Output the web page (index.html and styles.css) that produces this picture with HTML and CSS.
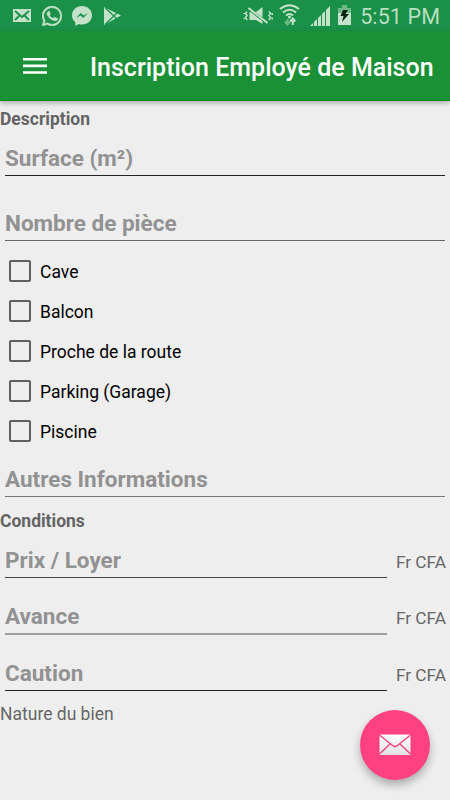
FILE: index.html
```html
<!DOCTYPE html>
<html lang="fr">
<head>
<meta charset="utf-8">
<title>Inscription Employé de Maison</title>
<link rel="stylesheet" href="styles.css">
</head>
<body>
<header class="status">
  <div class="notifications">
    <svg width="18" height="13" viewBox="0 0 18 13"><path class="tint" d="M0 0h18v13H0z"/><path class="cut" d="M2 2l7 6 7-6M2 11l4.500-4.500M16 11l-4.500-4.500"/></svg>
    <svg class="whatsapp" width="20" height="20" viewBox="0 0 24 24"><path class="tint ring" d="M17.472 14.382c-.297-.149-1.758-.867-2.030-.967-.273-.099-.471-.148-.670.150-.197.297-.767.966-.940 1.164-.173.199-.347.223-.644.075-.297-.150-1.255-.463-2.390-1.475-.883-.788-1.480-1.761-1.653-2.059-.173-.297-.018-.458.130-.606.134-.133.298-.347.446-.520.149-.174.198-.298.298-.497.099-.198.050-.371-.025-.520-.075-.149-.669-1.612-.916-2.207-.242-.579-.487-.500-.669-.510-.173-.008-.371-.010-.570-.010-.198 0-.520.074-.792.372-.272.297-1.040 1.016-1.040 2.479 0 1.462 1.065 2.875 1.213 3.074.149.198 2.096 3.200 5.077 4.487 2.500 1 3.500.900 4.200.800 1-.150 1.758-.719 2.006-1.413.248-.694.248-1.289.173-1.413-.074-.124-.272-.198-.570-.347zM12.050 0C5.500 0 .160 5.335.157 11.892c0 2.096.547 4.142 1.588 5.945L.057 24l6.305-1.654a11.900 11.900 0 0 0 5.683 1.448c6.554 0 11.890-5.335 11.893-11.893A11.820 11.820 0 0 0 12.050 0zm0 21.785a9.870 9.870 0 0 1-5.031-1.378l-.361-.214-3.741.982.998-3.648-.235-.374a9.860 9.860 0 0 1-1.510-5.260c.001-5.450 4.436-9.884 9.888-9.884a9.880 9.880 0 0 1 9.884 9.892c-.003 5.450-4.437 9.884-9.892 9.884z"/></svg>
    <svg class="messenger" width="20" height="20" viewBox="0 0 20 20"><path class="tint" d="M10 0C4.400 0 0 4 0 9.300c0 2.900 1.200 5.300 3.300 6.900V20l3.200-1.900c1.100.4 2.200.5 3.500.5 5.600 0 10-4 10-9.300S15.600 0 10 0z"/><path class="bolt" d="M4 12l4.800-5 2.700 2.500L16 7l-4.800 5-2.700-2.500z"/></svg>
    <svg class="play" width="18" height="18" viewBox="0 0 18 18"><path class="tint" d="M0 0l17 8.500L0 18z"/><path class="cut thin" d="M1 .5l12.500 12M1 17.500l12.500-12"/></svg>
  </div>
  <div class="system">
    <svg class="mute" width="29" height="18" viewBox="0 0 29 18"><path class="tint" d="M5.500 4H12l6.500-5v17L12 12H5.500z"/><path class="cut" d="M5 1l20 15"/><path class="wave strong" d="M4.500 0l19 15"/><path class="wave" d="M3 3.500L1.500 5.500 3 7.500l-1.500 2L3 12M0 5v1M0 10v1M25 3.500l1.500 2-1.500 2 1.500 2-1.500 2.500M28.200 5v2M28.200 9.500v2"/></svg>
    <svg class="wifi" width="21" height="22" viewBox="0 0 21 22"><path class="arc" d="M1 5Q10.500-2.500 20 5M4 8.500Q10.500 3 17 8.500M7 11.500q3.500-3 7 0"/><circle class="tint" cx="10.500" cy="13" r="1.500"/><path class="arrow dim" d="M8.500 15v5M6 17.500l2.500 3 2.500-3"/><path class="arrow" d="M13.800 21v-6M11.300 17.500l2.500-3 2.500 3"/></svg>
    <svg class="signal" width="20" height="20" viewBox="0 0 20 20"><path class="tint" d="M0 20l3-3v3H0zM4 16l3-3v7H4zM8 12l3-3v11H8zM12 8l3-3v15h-3zM16 4l4-4v20h-4z"/></svg>
    <svg class="battery" width="13" height="20" viewBox="0 0 13 20"><path class="tint dim" d="M4 0h5v3h4v5H0V3h4z"/><path class="tint" d="M0 8h13v12H0z"/><path class="charge" d="M5 5h5L7.500 9H11l-7 8 1.500-6H2.500z"/></svg>
    <span class="clock">5:51 PM</span>
  </div>
</header>
<nav class="appbar">
  <svg class="menu" width="24" height="16" viewBox="0 0 24 16"><path d="M0 0h24v2.600H0zM0 6.600h24v2.600H0zM0 13.200h24v2.600H0z"/></svg>
  <h1>Inscription Employé de Maison</h1>
</nav>
<main>
  <h2>Description</h2>
  <div class="field surface">Surface (m²)</div>
  <div class="field rooms">Nombre de pièce</div>
  <div class="options">
    <div class="option"><i class="box"></i><span>Cave</span></div>
    <div class="option"><i class="box"></i><span>Balcon</span></div>
    <div class="option"><i class="box"></i><span>Proche de la route</span></div>
    <div class="option"><i class="box"></i><span>Parking (Garage)</span></div>
    <div class="option"><i class="box"></i><span>Piscine</span></div>
  </div>
  <div class="field other">Autres Informations</div>
  <h2 class="conditions">Conditions</h2>
  <div class="price first"><div class="field">Prix / Loyer</div><span>Fr CFA</span></div>
  <div class="price middle"><div class="field">Avance</div><span>Fr CFA</span></div>
  <div class="price last"><div class="field">Caution</div><span>Fr CFA</span></div>
  <p>Nature du bien</p>
</main>
<div class="fab">
  <svg width="32" height="22" viewBox="0 0 32 22"><defs><linearGradient id="paper" x2="0" y2="1"><stop stop-color="#fff"/><stop offset="1" stop-color="#e2e2e2"/></linearGradient></defs><rect x=".5" y=".5" width="31" height="20.500" rx="1" fill="url(#paper)"/><path class="fold" d="M.5 1l13 10.500q2.500 2 5 0L31.500 1M.5 20L11 10M31.500 20L21 10"/></svg>
</div>
</body>
</html>
```

FILE: styles.css
```css
* { box-sizing: border-box; }
body {
  margin: 0;
  height: 800px;
  overflow: hidden;
  background: #eee;
  font-family: Roboto, sans-serif;
}
svg { display: block; flex: none; }
.status {
  display: flex;
  justify-content: space-between;
  height: 31px;
  padding: 0 10px 0 13px;
  background: #1a9048;
}
.notifications, .system { display: flex; align-items: flex-start; }
.notifications { padding-top: 9px; }
.whatsapp { margin: -3px 0 0 11px; }
.messenger { margin: -3px 0 0 10px; }
.play { margin: -2px 0 0 12px; }
.tint { fill: #c3e2c9; }
.ring { stroke: #c3e2c9; stroke-width: .5; }
.dim { opacity: .5; }
.cut { fill: none; stroke: #1a9048; stroke-width: 1.800; }
.mute .cut { stroke-width: 3; }
.thin { stroke-width: 1.300; }
.bolt { fill: #1a9048; }
.wave, .arc, .arrow { fill: none; stroke: #c3e2c9; stroke-width: 1.500; }
.strong { stroke-width: 2; }
.arc, .arrow { stroke-width: 2; }
.charge { fill: #062510; }
.mute { margin-top: 8px; overflow: visible; }
.wifi { margin: 4px 0 0 6px; }
.signal { margin: 6px 0 0 10px; }
.battery { margin: 5px 0 0 8px; }
.clock {
  margin-left: 9px;
  color: #b9dec0;
  font-size: 21.5px;
  line-height: 34px;
  letter-spacing: .1px;
  white-space: nowrap;
}
.appbar {
  display: flex;
  align-items: center;
  height: 70px;
  padding: 0 0 3px 23px;
  background: #1a9137;
  border-bottom: 1px solid #008a0a;
  box-shadow: 0 2px 5px rgba(0, 0, 0, .28);
}
.menu { fill: #fff; margin-top: 3px; }
h1 {
  margin: 7px 0 0 43px;
  color: #fff;
  font-size: 25px;
  font-weight: 500;
  line-height: 32px;
  white-space: nowrap;
}
main { display: flex; flex-direction: column; }
h2 {
  height: 35px;
  margin: 0;
  color: #646464;
  font-size: 17.5px;
  font-weight: 700;
  line-height: 37px;
}
.field {
  height: 40px;
  margin: 0 5px;
  border-bottom: 1px solid #222;
  color: #929292;
  font-size: 22.5px;
  font-weight: 700;
  line-height: 44px;
}
.rooms { margin-top: 25px; border-color: #666; }
.options { margin-top: 10px; }
.option {
  display: flex;
  align-items: center;
  height: 40px;
  padding-left: 9px;
  gap: 9px;
  color: #000;
  font-size: 17.5px;
}
.option span { padding-top: 2px; }
.box {
  width: 22px;
  height: 22px;
  border: 2px solid #606060;
  border-radius: 2px;
}
.other { margin-top: 6px; border-color: #777; }
.conditions { line-height: 48px; }
.price {
  display: flex;
  justify-content: space-between;
  align-items: flex-start;
  height: 40px;
  padding-right: 4px;
  color: #666;
  font-size: 17.3px;
}
.price .field { width: 382px; border-color: #444; }
.price > span { line-height: 49px; white-space: nowrap; }
.first { margin-top: 6px; }
.middle { height: 41px; margin-top: 16px; }
.middle .field { height: 41px; border-bottom: 2px solid #999; }
.price.middle .field { border-color: #a0a0a0; }
.last { margin-top: 16px; }
.price.last .field { border-color: #222; }
p {
  margin: 0;
  color: #666;
  font-size: 17.5px;
  line-height: 47px;
}
.fab {
  position: absolute;
  left: 360px;
  top: 710px;
  display: flex;
  align-items: center;
  justify-content: center;
  width: 70px;
  height: 70px;
  border-radius: 50%;
  background: #ff4081;
  box-shadow: 0 5px 8px rgba(0, 0, 0, .28);
}
.fold { fill: none; stroke: #f0437f; stroke-width: 1.400; }
```
